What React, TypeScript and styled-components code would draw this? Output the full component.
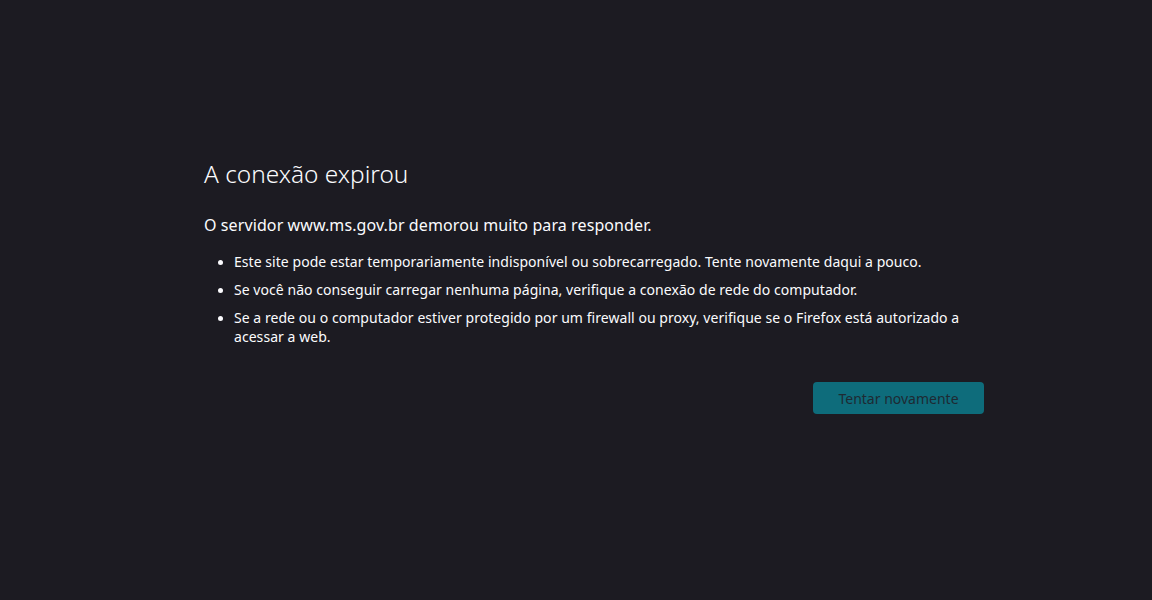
import React from 'react'
import styled, { createGlobalStyle } from 'styled-components'

const Global = createGlobalStyle`
html, body {
  margin: 0;
  padding: 0;
  background: #1c1b22;
  height: 100%;
}
body {
  font-family: "Noto Sans", "Open Sans", sans-serif;
  color: #fbfbfe;
}
`

const items = [
  'Este site pode estar temporariamente indisponível ou sobrecarregado. Tente novamente daqui a pouco.',
  'Se você não conseguir carregar nenhuma página, verifique a conexão de rede do computador.',
  'Se a rede ou o computador estiver protegido por um firewall ou proxy, verifique se o Firefox está autorizado a acessar a web.',
]

const App = () => {
  return (
    <>
      <Global />
      <Page>
        <Container>
          <Title>A conexão expirou</Title>
          <Subtitle>O servidor www.ms.gov.br demorou muito para responder.</Subtitle>
          <List>
            {items.map((t, i) => (
              <Item key={i}>{t}</Item>
            ))}
          </List>
          <Actions>
            <Retry disabled>Tentar novamente</Retry>
          </Actions>
        </Container>
      </Page>
    </>
  )
}

export default App

const Page = styled.div`
width: 1152px;
height: 600px;
box-sizing: border-box;
padding: 158px 0 0 204px;
`
const Container = styled.div`
width: 780px;
display: flex;
flex-direction: column;
`
const Title = styled.h1`
margin: 0;
font-size: 24.4px;
font-weight: 300;
line-height: 32px;
`
const Subtitle = styled.p`
margin: 23px 0 0;
font-size: 16px;
letter-spacing: 0.1px;
line-height: 24px;
`
const List = styled.ul`
margin: 15px 0 0;
padding-left: 30px;
`
const Item = styled.li`
font-size: 14px;
letter-spacing: 0.05px;
line-height: 19px;
margin-bottom: 9px;
&::marker {
  font-size: 13px;
}
`
const Actions = styled.div`
display: flex;
justify-content: flex-end;
margin-top: 27px;
`
const Retry = styled.button`
width: 171px;
height: 32px;
border: none;
border-radius: 4px;
background: #0e6c7b;
color: #1e2a33;
font-family: inherit;
font-size: 14px;
padding: 0;
`
